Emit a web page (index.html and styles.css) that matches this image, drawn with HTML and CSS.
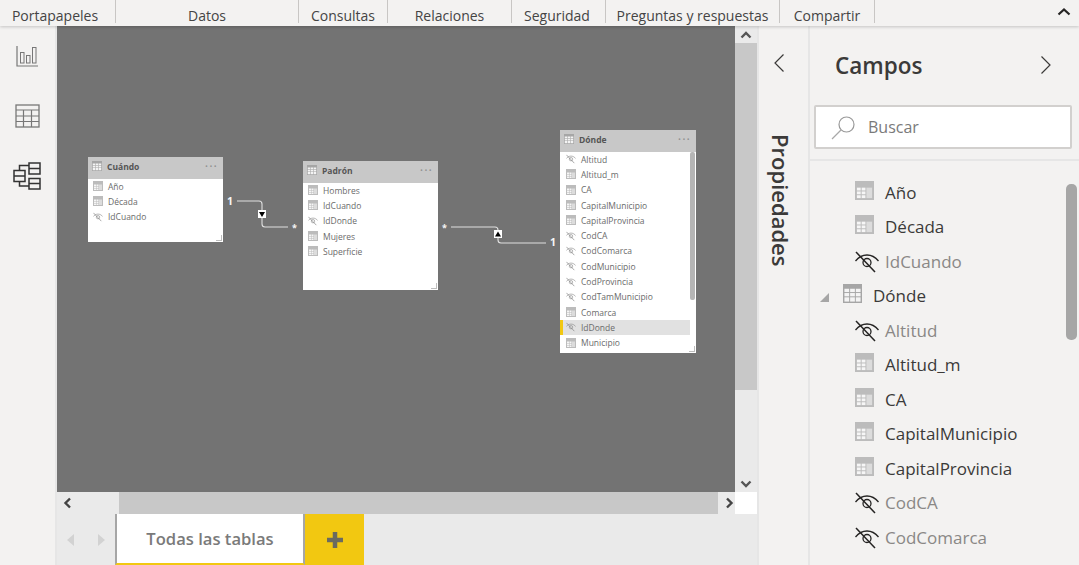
FILE: index.html
```html
<!DOCTYPE html>
<html lang="es">
<head>
    <meta charset="UTF-8">
    <title>Modelo</title>
    <link rel="stylesheet" href="styles.css">
</head>
<body>
    <svg class="defs" width="0" height="0">
        <symbol id="ico_field" viewBox="0 0 20 20">
            <rect x="0" y="0" width="20" height="20" fill="#bcbcbc"/>
            <rect x="2" y="7" width="4" height="3" fill="#f6f6f6"/>
            <rect x="7" y="7" width="4" height="3" fill="#f6f6f6"/>
            <rect x="2" y="11" width="4" height="3" fill="#f6f6f6"/>
            <rect x="7" y="11" width="4" height="3" fill="#f6f6f6"/>
            <rect x="2" y="15" width="4" height="3" fill="#f6f6f6"/>
            <rect x="7" y="15" width="4" height="3" fill="#f6f6f6"/>
            <rect x="12" y="7" width="6" height="11" fill="#dcdcdc"/>
        </symbol>
        <symbol id="ico_table" viewBox="0 0 20 20">
            <rect x="0" y="0" width="20" height="20" fill="#a6a6a6"/>
            <rect x="1.500" y="5" width="5" height="3.500" fill="#f4f4f4"/>
            <rect x="7.500" y="5" width="5" height="3.500" fill="#f4f4f4"/>
            <rect x="13.500" y="5" width="5" height="3.500" fill="#f4f4f4"/>
            <rect x="1.500" y="9.500" width="5" height="3.500" fill="#f4f4f4"/>
            <rect x="7.500" y="9.500" width="5" height="3.500" fill="#f4f4f4"/>
            <rect x="13.500" y="9.500" width="5" height="3.500" fill="#f4f4f4"/>
            <rect x="1.500" y="14" width="5" height="4.500" fill="#f4f4f4"/>
            <rect x="7.500" y="14" width="5" height="4.500" fill="#f4f4f4"/>
            <rect x="13.500" y="14" width="5" height="4.500" fill="#f4f4f4"/>
        </symbol>
        <symbol id="ico_hidden" viewBox="0 0 24 22">
            <path d="M0.500 10 C7 2 17 2 23.500 10" fill="none" stroke="currentColor" stroke-width="1.300"/>
            <circle cx="12" cy="11.500" r="4" fill="none" stroke="currentColor" stroke-width="1.300"/>
            <path d="M1 1 L20 21" fill="none" stroke="currentColor" stroke-width="1.500"/>
        </symbol>
    </svg>

    <div class="ribbon">
        <div class="rib_group w_porta">Portapapeles</div>
        <div class="rib_group w_datos">Datos</div>
        <div class="rib_group w_cons">Consultas</div>
        <div class="rib_group w_rel">Relaciones</div>
        <div class="rib_group w_seg">Seguridad</div>
        <div class="rib_group w_preg">Preguntas y respuestas</div>
        <div class="rib_group w_comp">Compartir</div>
        <svg class="rib_collapse" width="14" height="9" viewBox="0 0 14 9"><path d="M1.500 7.500 L7 2.500 L12.500 7.500" fill="none" stroke="#252423" stroke-width="2.200"/></svg>
    </div>

    <div class="main">
        <div class="nav">
            <svg class="nav_report" width="24" height="22" viewBox="0 0 24 22">
                <path d="M1 0 V20 H22" fill="none" stroke="#777" stroke-width="1.200"/>
                <rect x="4.500" y="6.500" width="3.500" height="10.500" fill="none" stroke="#777"/>
                <rect x="10.500" y="9.500" width="3.500" height="7.500" fill="none" stroke="#777"/>
                <rect x="16.500" y="1.500" width="3.500" height="15.500" fill="none" stroke="#777"/>
            </svg>
            <svg class="nav_data" width="25" height="24" viewBox="0 0 25 24">
                <rect x="1" y="1" width="23" height="22" fill="none" stroke="#777" stroke-width="1.300"/>
                <path d="M1 6 H24 M1 12 H24 M1 17.500 H24 M8.500 6 V23 M16.500 6 V23" fill="none" stroke="#777" stroke-width="1.200"/>
            </svg>
            <svg class="nav_model" width="29" height="28" viewBox="0 0 29 28">
                <g fill="none" stroke="#333" stroke-width="1.500">
                    <rect x="1" y="8.500" width="11" height="11"/>
                    <rect x="16" y="1" width="11" height="11"/>
                    <rect x="16" y="16.500" width="11" height="10.500"/>
                    <path d="M1 14 H12 M16 6.500 H27 M16 21.500 H27 M6.500 8.500 V3.500 H16 M6.500 19.500 V24 H16"/>
                </g>
            </svg>
        </div>

        <div class="center">
            <div class="canvas_row">
                <div class="canvas">
                    <svg class="rel_lines" width="678" height="466" viewBox="57 26 678 466">
                        <g fill="none" stroke="#e0e0e0" stroke-width="1.100">
                            <path d="M237 201 H259 Q262 201 262 204 V224 Q262 227 265 227 H288"/>
                            <path d="M451 227 H495 Q498 227 498 230 V240 Q498 243 501 243 H546"/>
                        </g>
                        <rect x="258" y="210" width="8" height="8" fill="#fff"/>
                        <path d="M259 212 H265 L262 217 Z" fill="#000"/>
                        <rect x="494" y="230" width="8" height="8" fill="#fff"/>
                        <path d="M495 236.500 H501 L498 231.500 Z" fill="#000"/>
                        <g class="rel_text">
                            <text x="227" y="205">1</text>
                            <text class="rel_star" x="292" y="231">*</text>
                            <text class="rel_star" x="442" y="231">*</text>
                            <text x="550" y="246">1</text>
                        </g>
                    </svg>

                    <div class="card card_cuando">
                        <div class="card_head"><svg class="c_ico"><use href="#ico_table"/></svg><b>Cuándo</b><span class="dots">···</span></div>
                        <div class="c_row"><svg class="c_ico"><use href="#ico_field"/></svg>Año</div>
                        <div class="c_row"><svg class="c_ico"><use href="#ico_field"/></svg>Década</div>
                        <div class="c_row"><svg class="c_ico"><use href="#ico_hidden"/></svg>IdCuando</div>
                        <span class="grip"></span>
                    </div>

                    <div class="card card_padron">
                        <div class="card_head"><svg class="c_ico"><use href="#ico_table"/></svg><b>Padrón</b><span class="dots">···</span></div>
                        <div class="c_row"><svg class="c_ico"><use href="#ico_field"/></svg>Hombres</div>
                        <div class="c_row"><svg class="c_ico"><use href="#ico_field"/></svg>IdCuando</div>
                        <div class="c_row"><svg class="c_ico"><use href="#ico_hidden"/></svg>IdDonde</div>
                        <div class="c_row"><svg class="c_ico"><use href="#ico_field"/></svg>Mujeres</div>
                        <div class="c_row"><svg class="c_ico"><use href="#ico_field"/></svg>Superficie</div>
                        <span class="grip"></span>
                    </div>

                    <div class="card card_donde">
                        <div class="card_head"><svg class="c_ico"><use href="#ico_table"/></svg><b>Dónde</b><span class="dots">···</span></div>
                        <div class="c_row"><svg class="c_ico"><use href="#ico_hidden"/></svg>Altitud</div>
                        <div class="c_row"><svg class="c_ico"><use href="#ico_field"/></svg>Altitud_m</div>
                        <div class="c_row"><svg class="c_ico"><use href="#ico_field"/></svg>CA</div>
                        <div class="c_row"><svg class="c_ico"><use href="#ico_field"/></svg>CapitalMunicipio</div>
                        <div class="c_row"><svg class="c_ico"><use href="#ico_field"/></svg>CapitalProvincia</div>
                        <div class="c_row"><svg class="c_ico"><use href="#ico_hidden"/></svg>CodCA</div>
                        <div class="c_row"><svg class="c_ico"><use href="#ico_hidden"/></svg>CodComarca</div>
                        <div class="c_row"><svg class="c_ico"><use href="#ico_hidden"/></svg>CodMunicipio</div>
                        <div class="c_row"><svg class="c_ico"><use href="#ico_hidden"/></svg>CodProvincia</div>
                        <div class="c_row"><svg class="c_ico"><use href="#ico_hidden"/></svg>CodTamMunicipio</div>
                        <div class="c_row"><svg class="c_ico"><use href="#ico_field"/></svg>Comarca</div>
                        <div class="c_row c_selected"><svg class="c_ico"><use href="#ico_hidden"/></svg>IdDonde</div>
                        <div class="c_row"><svg class="c_ico"><use href="#ico_field"/></svg>Municipio</div>
                        <span class="card_thumb"></span>
                        <span class="grip"></span>
                    </div>
                </div>
                <div class="vscroll">
                    <div class="v_btn"><svg width="12" height="8" viewBox="0 0 12 8"><path d="M1.500 6.500 L6 2 L10.500 6.500" fill="none" stroke="#555" stroke-width="2.400"/></svg></div>
                    <div class="v_thumb"></div>
                    <div class="v_track"></div>
                    <div class="v_btn"><svg width="12" height="8" viewBox="0 0 12 8"><path d="M1.500 1.500 L6 6 L10.500 1.500" fill="none" stroke="#555" stroke-width="2.400"/></svg></div>
                </div>
            </div>
            <div class="hscroll">
                <div class="h_btn_l"><svg width="9" height="12" viewBox="0 0 9 12"><path d="M7 1.500 L2.500 6 L7 10.500" fill="none" stroke="#444" stroke-width="2.400"/></svg></div>
                <div class="h_thumb"></div>
                <div class="h_btn_r"><svg width="9" height="12" viewBox="0 0 9 12"><path d="M2 1.500 L6.500 6 L2 10.500" fill="none" stroke="#444" stroke-width="2.400"/></svg></div>
                <div class="h_corner"></div>
            </div>
            <div class="tabs">
                <div class="tab_nav">
                    <svg width="8" height="12" viewBox="0 0 8 12"><path d="M7 0 V12 L0 6 Z" fill="#d2d2d2"/></svg>
                    <svg width="8" height="12" viewBox="0 0 8 12"><path d="M1 0 V12 L8 6 Z" fill="#d2d2d2"/></svg>
                </div>
                <div class="tab">Todas las tablas</div>
                <div class="tab_add">
                    <svg width="18" height="18" viewBox="0 0 18 18"><path d="M9 1 V17 M1 9 H17" stroke="#6b6b60" stroke-width="4.500"/></svg>
                </div>
            </div>
        </div>

        <div class="props">
            <svg class="props_arrow" width="12" height="20" viewBox="0 0 12 20"><path d="M10.500 1.500 L2 10 L10.500 18.500" fill="none" stroke="#3b3a39" stroke-width="1.200"/></svg>
            <div class="props_title">Propiedades</div>
        </div>

        <div class="fields">
            <div class="fields_head">
                <span class="fields_title">Campos</span>
                <svg width="12" height="20" viewBox="0 0 12 20"><path d="M1.500 1.500 L10 10 L1.500 18.500" fill="none" stroke="#3b3a39" stroke-width="1.200"/></svg>
            </div>
            <div class="search">
                <svg width="25" height="25" viewBox="0 0 25 25">
                    <circle cx="15.500" cy="9.500" r="7.500" fill="none" stroke="#999" stroke-width="1.200"/>
                    <path d="M10 15 L1 24" fill="none" stroke="#a8a8a8" stroke-width="1.300"/>
                </svg>
                <span>Buscar</span>
            </div>
            <div class="f_list">
                <div class="f_row"><svg class="f_ico"><use href="#ico_field"/></svg>Año</div>
                <div class="f_row"><svg class="f_ico"><use href="#ico_field"/></svg>Década</div>
                <div class="f_row f_hidden"><svg class="f_ico"><use href="#ico_hidden"/></svg>IdCuando</div>
                <div class="f_row f_tbl"><span class="f_tri"></span><svg class="f_ico"><use href="#ico_table"/></svg>Dónde</div>
                <div class="f_row f_hidden"><svg class="f_ico"><use href="#ico_hidden"/></svg>Altitud</div>
                <div class="f_row"><svg class="f_ico"><use href="#ico_field"/></svg>Altitud_m</div>
                <div class="f_row"><svg class="f_ico"><use href="#ico_field"/></svg>CA</div>
                <div class="f_row"><svg class="f_ico"><use href="#ico_field"/></svg>CapitalMunicipio</div>
                <div class="f_row"><svg class="f_ico"><use href="#ico_field"/></svg>CapitalProvincia</div>
                <div class="f_row f_hidden"><svg class="f_ico"><use href="#ico_hidden"/></svg>CodCA</div>
                <div class="f_row f_hidden"><svg class="f_ico"><use href="#ico_hidden"/></svg>CodComarca</div>
                <span class="f_thumb"></span>
            </div>
        </div>
    </div>
</body>
</html>
```

FILE: styles.css
```css
* {
    margin: 0px;
    padding: 0px;
    box-sizing: border-box;
}

html, body {
    width: 1079px;
    height: 565px;
    overflow: hidden;
}

body {
    background-color: #f3f2f1;
    font-family: "Open Sans", "Noto Sans", Arial, sans-serif;
    color: #3b3a39;
    display: flex;
    flex-direction: column;
}

.defs {
    position: absolute;
}

/* ribbon */

.ribbon {
    height: 26px;
    flex: none;
    display: flex;
    align-items: flex-start;
    background-color: #f3f2f1;
    position: relative;
    z-index: 2;
    box-shadow: 0 1px 3px #00000030;
}

.rib_group {
    height: 23px;
    line-height: 32px;
    text-align: center;
    font-size: 14px;
    color: #444;
    border-right: 1px solid #c8c6c4;
    white-space: nowrap;
}

.w_porta { width: 116px; padding-right: 5px; }
.w_datos { width: 183px; }
.w_cons { width: 89px; }
.w_rel { width: 124px; }
.w_seg { width: 94px; padding-right: 3px; }
.w_preg { width: 174px; }
.w_comp { width: 95px; }

.rib_collapse {
    position: absolute;
    top: 7px;
    left: 1057px;
}

/* main row */

.main {
    flex: 1;
    display: flex;
    min-height: 0;
}

.nav {
    width: 57px;
    flex: none;
    border-right: 2px solid #e6e6e6;
    display: flex;
    flex-direction: column;
    align-items: center;
    padding-top: 20px;
}

.nav_report {
    margin-bottom: 36px;
}

.nav_data {
    margin-bottom: 34px;
}

.center {
    width: 700px;
    flex: none;
    display: flex;
    flex-direction: column;
}

.canvas_row {
    height: 466px;
    flex: none;
    display: flex;
}

.canvas {
    width: 678px;
    background-color: #737373;
    position: relative;
    overflow: hidden;
}

.rel_lines {
    position: absolute;
    left: 0;
    top: 0;
}

.rel_text {
    fill: #f5f5f5;
    font-size: 10.500px;
    font-weight: 700;
}

.rel_star {
    font-size: 9px;
}

/* table cards on the diagram */

.card {
    position: absolute;
    width: 135px;
    background-color: #ffffff;
    color: #6b6b6b;
    font-size: 8.500px;
}

.card_cuando { left: 31px; top: 131px; height: 85px; }
.card_padron { left: 246px; top: 135px; height: 129px; }
.card_donde { left: 503px; top: 104px; height: 223px; width: 136px; }

.card_head {
    height: 22px;
    background-color: #c8c8c8;
    display: flex;
    align-items: center;
    padding-left: 4px;
    padding-bottom: 4px;
    color: #555;
    margin-bottom: -0.500px;
}

.card_head b {
    font-weight: 700;
    margin-left: 2px;
}

.dots {
    margin-left: auto;
    margin-right: 5px;
    font-size: 13px;
    letter-spacing: 1px;
    color: #8f8f8f;
}

.c_row {
    height: 15.300px;
    display: flex;
    align-items: center;
    padding-left: 5px;
    white-space: nowrap;
}

.card_donde .c_row {
    padding-left: 6px;
}

.c_ico {
    width: 10px;
    height: 10px;
    margin-right: 5px;
    flex: none;
    color: #777;
}

.card_head .c_ico {
    margin-right: 3px;
}

.card_donde .c_selected {
    background-color: #e1e1e1;
    width: 130px;
    border-left: 3px solid #f2c811;
    padding-left: 3px;
}

.card_thumb {
    position: absolute;
    right: 1px;
    top: 22px;
    width: 5px;
    height: 148px;
    background-color: #b5b5b5;
    border-radius: 2px;
}

.grip {
    position: absolute;
    right: 1px;
    bottom: 1px;
    width: 6px;
    height: 6px;
    border-right: 1px solid #bdbdbd;
    border-bottom: 1px solid #bdbdbd;
}

/* scrollbars */

.vscroll {
    width: 22px;
    display: flex;
    flex-direction: column;
    background-color: #eaeaea;
}

.v_btn {
    height: 17px;
    flex: none;
    display: flex;
    align-items: center;
    justify-content: center;
}

.v_thumb {
    height: 347px;
    background-color: #c8c8c8;
}

.v_track {
    flex: 1;
}

.hscroll {
    height: 22px;
    flex: none;
    display: flex;
    background-color: #eaeaea;
}

.h_btn_l {
    width: 62px;
    padding-left: 6px;
    display: flex;
    align-items: center;
}

.h_thumb {
    width: 599px;
    background-color: #c8c8c8;
}

.h_btn_r {
    width: 17px;
    padding-left: 7px;
    display: flex;
    align-items: center;
}

.h_corner {
    width: 22px;
    background-color: #ffffff;
}

/* bottom tabs */

.tabs {
    flex: 1;
    display: flex;
    background-color: #eaeaea;
}

.tab_nav {
    width: 58px;
    display: flex;
    align-items: center;
    justify-content: space-between;
    padding: 0 10px;
}

.tab {
    width: 190px;
    background-color: #ffffff;
    border-left: 2px solid #a6a6a6;
    border-right: 2px solid #a6a6a6;
    border-bottom: 2px solid #f2c811;
    text-align: center;
    line-height: 49px;
    font-size: 16.600px;
    font-weight: 600;
    color: #7a7a7a;
}

.tab_add {
    width: 59px;
    background-color: #f2c811;
    display: flex;
    align-items: center;
    justify-content: center;
}

/* properties pane */

.props {
    width: 53px;
    flex: none;
    border-left: 2px solid #e6e6e6;
    border-right: 2px solid #e6e6e6;
    display: flex;
    flex-direction: column;
    align-items: center;
    padding-top: 27px;
}

.props_arrow {
    margin-right: 9px;
}

.props_title {
    margin-top: 61px;
    margin-right: 5px;
    writing-mode: vertical-rl;
    font-size: 22px;
    font-weight: 600;
    color: #3b3a39;
}

/* fields pane */

.fields {
    flex: 1;
    display: flex;
    flex-direction: column;
    min-width: 0;
}

.fields_head {
    height: 79px;
    flex: none;
    padding: 0 27px 0 25px;
    display: flex;
    justify-content: space-between;
    align-items: center;
}

.fields_head svg {
    margin-top: -2px;
}

.fields_title {
    font-size: 22.500px;
    font-weight: 600;
}

.search {
    height: 44px;
    flex: none;
    margin: 0 7px 0 4px;
    background-color: #ffffff;
    border: 2px solid #d2d0ce;
    border-radius: 2px;
    display: flex;
    align-items: center;
    padding-left: 15px;
    font-size: 16px;
    color: #7a7a7a;
}

.search span {
    margin-left: 12px;
}

.f_list {
    flex: 1;
    border-top: 2px solid #e6e6e6;
    margin-top: 10px;
    padding-top: 14px;
    position: relative;
    overflow: hidden;
}

.f_row {
    height: 34.500px;
    display: flex;
    align-items: center;
    padding-left: 45px;
    font-size: 17px;
    white-space: nowrap;
    color: #3b3a39;
}

.f_ico {
    width: 19px;
    height: 19px;
    margin-right: 11px;
    margin-top: -4px;
    flex: none;
    color: #252423;
}

.f_hidden {
    color: #8a8886;
}

.f_hidden .f_ico {
    color: #252423;
    width: 24px;
    height: 22px;
    margin-right: 6px;
    margin-top: 1px;
}

.f_tbl {
    padding-left: 10px;
}

.f_tri {
    width: 0;
    height: 0;
    border-left: 9px solid transparent;
    border-bottom: 9px solid #a6a6a6;
    margin-right: 14px;
    margin-top: 4px;
}

.f_thumb {
    position: absolute;
    right: 2px;
    top: 23px;
    width: 11px;
    height: 156px;
    background-color: #a6a6a6;
    border-radius: 5px;
}
```
